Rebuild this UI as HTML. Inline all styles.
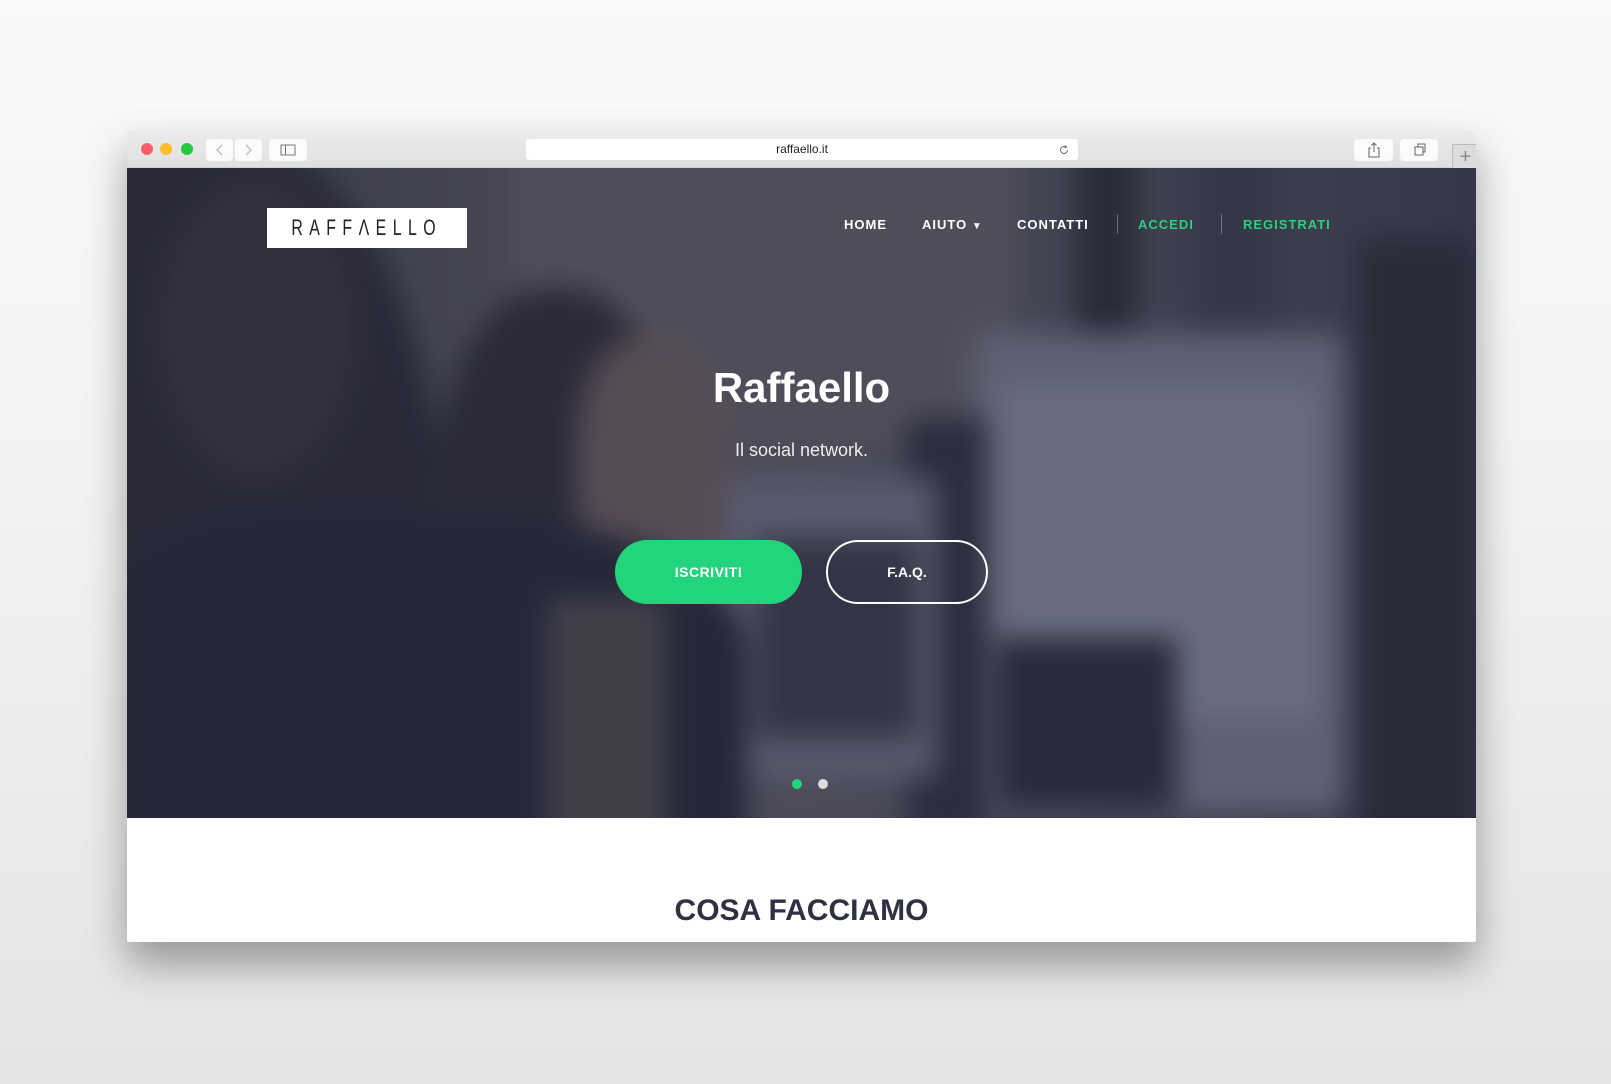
<!DOCTYPE html>
<html><head><meta charset="utf-8">
<style>
*{margin:0;padding:0;box-sizing:border-box}
html,body{width:1611px;height:1084px;overflow:hidden}
body{background:linear-gradient(#f9f9f9 0%,#f3f3f3 40%,#e4e4e4 100%);font-family:"Liberation Sans",sans-serif;position:relative}
.win{position:absolute;left:127px;top:130px;width:1349px;height:812px;background:#fff;box-shadow:0 22px 40px rgba(0,0,0,.35);overflow:hidden;border-radius:4px 4px 2px 2px}
.bar{position:absolute;left:0;top:0;width:1349px;height:38px;background:linear-gradient(#ececec,#e0e0e0);border-bottom:1px solid #cfcfcf}
.dot{position:absolute;top:13px;width:12px;height:12px;border-radius:50%}
.btn{position:absolute;top:9px;height:22px;background:#fbfbfb;border-radius:4px}
.url{position:absolute;left:399px;top:9px;width:552px;height:21px;background:#fff;border-radius:3px;font-size:12px;color:#222;text-align:center;line-height:21px}
.hero{position:absolute;left:0;top:38px;width:1349px;height:650px;overflow:hidden;background:#4a4b5a}
.bg{position:absolute;inset:-30px;filter:blur(14px)}
.bg div{position:absolute}
.ov{position:absolute;inset:0;background:rgba(30,32,50,.25)}
.logo{position:absolute;left:140px;top:40px;width:200px;height:40px;background:#fff;color:#222;text-align:center;line-height:40px;overflow:hidden}
.logo span{display:inline-block;font-size:22px;letter-spacing:9px;transform:scaleX(.72);transform-origin:center;white-space:nowrap;margin-left:-60px;margin-right:-60px}
.nav{position:absolute;top:49px;font-size:13px;font-weight:bold;letter-spacing:1px;color:#fff}
.g{color:#2ad07c}
.sep{position:absolute;top:46px;width:1px;height:20px;background:rgba(255,255,255,.3)}
h1{position:absolute;left:0;width:1349px;top:196px;text-align:center;color:#fff;font-size:42px;font-weight:bold}
.sub{position:absolute;left:0;width:1349px;top:272px;text-align:center;color:#fff;font-size:18px;opacity:.9}
.b1{position:absolute;left:488px;top:372px;width:187px;height:64px;border-radius:32px;background:#22d47c;color:#fff;font-weight:bold;font-size:14px;text-align:center;line-height:64px;letter-spacing:.5px}
.b2{position:absolute;left:699px;top:372px;width:162px;height:64px;border-radius:32px;border:2px solid #fff;color:#fff;font-weight:bold;font-size:14px;text-align:center;line-height:60px}
.pd{position:absolute;top:611px;width:10px;height:10px;border-radius:50%}
h2{position:absolute;left:0;width:1349px;top:764px;text-align:center;color:#2f3142;font-size:30px;font-weight:bold}
</style></head><body>
<div class="win">
 <div class="bar">
  <div class="dot" style="left:14px;background:#fc5f67"></div>
  <div class="dot" style="left:33px;background:#fdbd2d"></div>
  <div class="dot" style="left:54px;background:#25c93f"></div>
  <div class="btn" style="left:79px;width:27px"><svg width="27" height="22"><path d="M16 6l-5 5 5 5" stroke="#bbb" fill="none" stroke-width="1.3"/></svg></div>
  <div class="btn" style="left:108px;width:27px"><svg width="27" height="22"><path d="M11 6l5 5-5 5" stroke="#bbb" fill="none" stroke-width="1.3"/></svg></div>
  <div class="btn" style="left:142px;width:38px"><svg width="38" height="22"><rect x="12" y="6" width="14" height="10" stroke="#777" fill="none"/><line x1="16.5" y1="6" x2="16.5" y2="16" stroke="#777"/></svg></div>
  <div class="url">raffaello.it<svg style="position:absolute;right:8px;top:5px" width="12" height="12"><path d="M9.5 6a3.5 3.5 0 1 1-1.5-2.9" stroke="#666" fill="none"/><path d="M7 1.5l1.5 1.6-1.8 1" stroke="#666" fill="none"/></svg></div>
  <div class="btn" style="left:1227px;width:39px"><svg width="39" height="22"><path d="M17 9h-2v9h10v-9h-2M20 4v9M17.5 6.5L20 4l2.5 2.5" stroke="#666" fill="none"/></svg></div>
  <div class="btn" style="left:1273px;width:38px"><svg width="38" height="22"><rect x="15" y="8" width="8" height="8" stroke="#666" fill="none"/><path d="M18 8V5h7v8h-2" stroke="#666" fill="none"/></svg></div>
  <div style="position:absolute;left:1325px;top:14px;width:26px;height:26px;background:#dcdcdc;border-left:1px solid #bbb;border-top:1px solid #bbb;color:#888;font-size:20px;text-align:center;line-height:24px">+</div>
 </div>
 <div class="hero">
  <div class="bg">
   <div style="left:0;top:0;width:1420px;height:720px;background:linear-gradient(90deg,#3c3d4b 0%,#55555f 30%,#5b5a66 50%,#4d4f5c 70%,#3c3f4d 100%)"></div>
   <div style="left:420px;top:0;width:500px;height:300px;background:#605d67"></div>
   <div style="left:980px;top:0;width:60px;height:380px;background:#2d2f3a"></div>
   <div style="left:1090px;top:0;width:90px;height:380px;background:#3e4050"></div>
   <div style="left:878px;top:195px;width:370px;height:480px;background:#73778a;border-radius:20px"></div>
   <div style="left:900px;top:250px;width:320px;height:330px;background:#82869a"></div>
   <div style="left:900px;top:500px;width:180px;height:170px;background:#2c2f3c"></div>
   <div style="left:810px;top:280px;width:80px;height:420px;background:#2f3240"></div>
   <div style="left:610px;top:340px;width:230px;height:300px;background:#6a6e80"></div>
   <div style="left:660px;top:400px;width:160px;height:200px;background:#3a3d4c"></div>
   <div style="left:1260px;top:100px;width:120px;height:620px;background:#2e303c"></div>
   <div style="left:0;top:0;width:350px;height:720px;background:#2c2d3a;border-radius:0 60% 0 0"></div>
   <div style="left:60px;top:40px;width:200px;height:300px;background:#3b3540;border-radius:50%"></div>
   <div style="left:330px;top:150px;width:260px;height:570px;background:#2f2f3a;border-radius:45% 45% 0 0"></div>
   <div style="left:480px;top:200px;width:150px;height:260px;background:#685b62;border-radius:40% 50% 30% 40%"></div>
   <div style="left:0;top:380px;width:650px;height:340px;background:#272a3a;border-radius:30% 40% 0 0"></div>
   <div style="left:450px;top:460px;width:120px;height:260px;background:#4d4a52"></div>
  </div>
  <div class="ov"></div>
  <div class="logo"><span>RAFFΛELLO</span></div>
  <div class="nav" style="left:717px">HOME</div>
  <div class="nav" style="left:795px">AIUTO <span style="font-size:10px">▼</span></div>
  <div class="nav" style="left:890px">CONTATTI</div>
  <div class="sep" style="left:990px"></div>
  <div class="nav g" style="left:1011px">ACCEDI</div>
  <div class="sep" style="left:1094px"></div>
  <div class="nav g" style="left:1116px">REGISTRATI</div>
  <h1>Raffaello</h1>
  <div class="sub">Il social network.</div>
  <div class="b1">ISCRIVITI</div>
  <div class="b2">F.A.Q.</div>
  <div class="pd" style="left:665px;background:#22d47c"></div>
  <div class="pd" style="left:691px;background:#ddd"></div>
 </div>
 <h2>COSA FACCIAMO</h2>
</div>
</body></html>
